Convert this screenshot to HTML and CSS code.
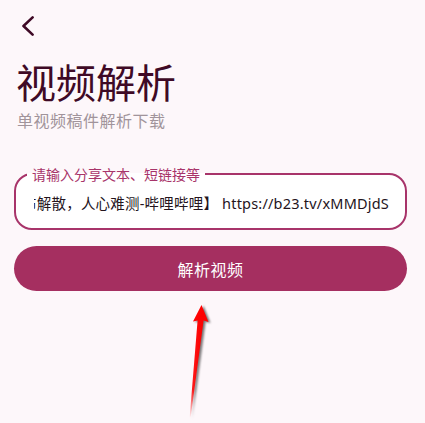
FILE: index.html
```html
<!DOCTYPE html>
<html lang="zh">
<head>
<meta charset="utf-8">
<title>视频解析</title>
<link rel="stylesheet" href="styles.css">
</head>
<body>
<div class="page">
  <header class="topbar">
    <svg class="back" width="12" height="20" viewBox="0 0 12 20"><path d="M10.6 1.4 L1.5 10 L10.6 18.6" fill="none" stroke="#3f0a26" stroke-width="2.6" stroke-linecap="round" stroke-linejoin="round"/></svg>
  </header>
  <h1 class="title">视频解析</h1>
  <p class="subtitle">单视频稿件解析下载</p>
  <fieldset class="field">
    <legend class="label">请输入分享文本、短链接等</legend>
    <div class="value"><span class="value-text">【某团体突然宣布解散，人心难测-哔哩哔哩】 https://b23.tv/xMMDjdS</span></div>
  </fieldset>
  <button class="btn">解析视频</button>
</div>
<svg class="pointer" width="425" height="423" viewBox="0 0 425 423">
  <defs>
    <linearGradient id="fade" x1="0" y1="1" x2="0" y2="0">
      <stop offset="0" stop-color="#ff0000" stop-opacity="0"/>
      <stop offset="0.25" stop-color="#ff0000" stop-opacity="0.9"/>
      <stop offset="1" stop-color="#ff0000"/>
    </linearGradient>
  </defs>
  <polygon points="201.5,305 208.5,322 203.6,320.5 190.6,418 189.6,418 197.6,320.5 193,321.5" fill="url(#fade)"/>
</svg>
</body>
</html>
```
FILE: styles.css
```css
html, body {
  margin: 0;
  padding: 0;
  background: #fdf7fa;
}
body {
  font-family: "Noto Sans", "Noto Sans CJK SC", sans-serif;
  width: 425px;
  height: 423px;
  overflow: hidden;
  position: relative;
}
.page {
  padding: 0 18px 0 14px;
}
.topbar {
  height: 59px;
  padding: 16px 0 0 8px;
  box-sizing: border-box;
}
.back {
  display: block;
}
.title {
  margin: -3px 0 3px;
  padding-left: 2px;
  font-size: 40px;
  line-height: 50px;
  font-weight: 400;
  color: #3f0a26;
  font-family: "Noto Sans CJK SC", sans-serif;
}
.subtitle {
  margin: 0;
  padding-left: 3px;
  font-size: 16px;
  line-height: 22px;
  letter-spacing: 0.5px;
  color: #a1949b;
  font-family: "Noto Sans CJK SC", sans-serif;
}
.field {
  margin: 34px 0 0;
  padding: 0 16px 0 18px;
  border: 2px solid #a8346a;
  border-radius: 18px;
  background: #ffffff;
  min-width: 0;
}
.label {
  margin-left: -7px;
  padding: 0 5px;
  font-size: 14px;
  line-height: 18px;
  color: #a8346a;
  font-family: "Noto Sans CJK SC", sans-serif;
}
.value {
  height: 51px;
  display: flex;
  justify-content: flex-end;
  align-items: center;
  overflow: hidden;
  margin-top: -6px;
}
.value-text {
  white-space: nowrap;
  font-size: 14.5px;
  color: #24141c;
  font-family: "Noto Sans", "Noto Sans CJK SC", sans-serif;
  letter-spacing: 0.2px;
}
.btn {
  display: block;
  width: 100%;
  height: 45px;
  margin-top: 16px;
  border: none;
  border-radius: 23px;
  background: #a52f60;
  color: #ffffff;
  font-size: 16px;
  font-family: "Noto Sans CJK SC", sans-serif;
  letter-spacing: 0.5px;
}
.pointer {
  position: absolute;
  left: 0;
  top: 0;
  pointer-events: none;
  filter: drop-shadow(2px 1px 1.2px rgba(0, 0, 0, 0.55));
}
```
